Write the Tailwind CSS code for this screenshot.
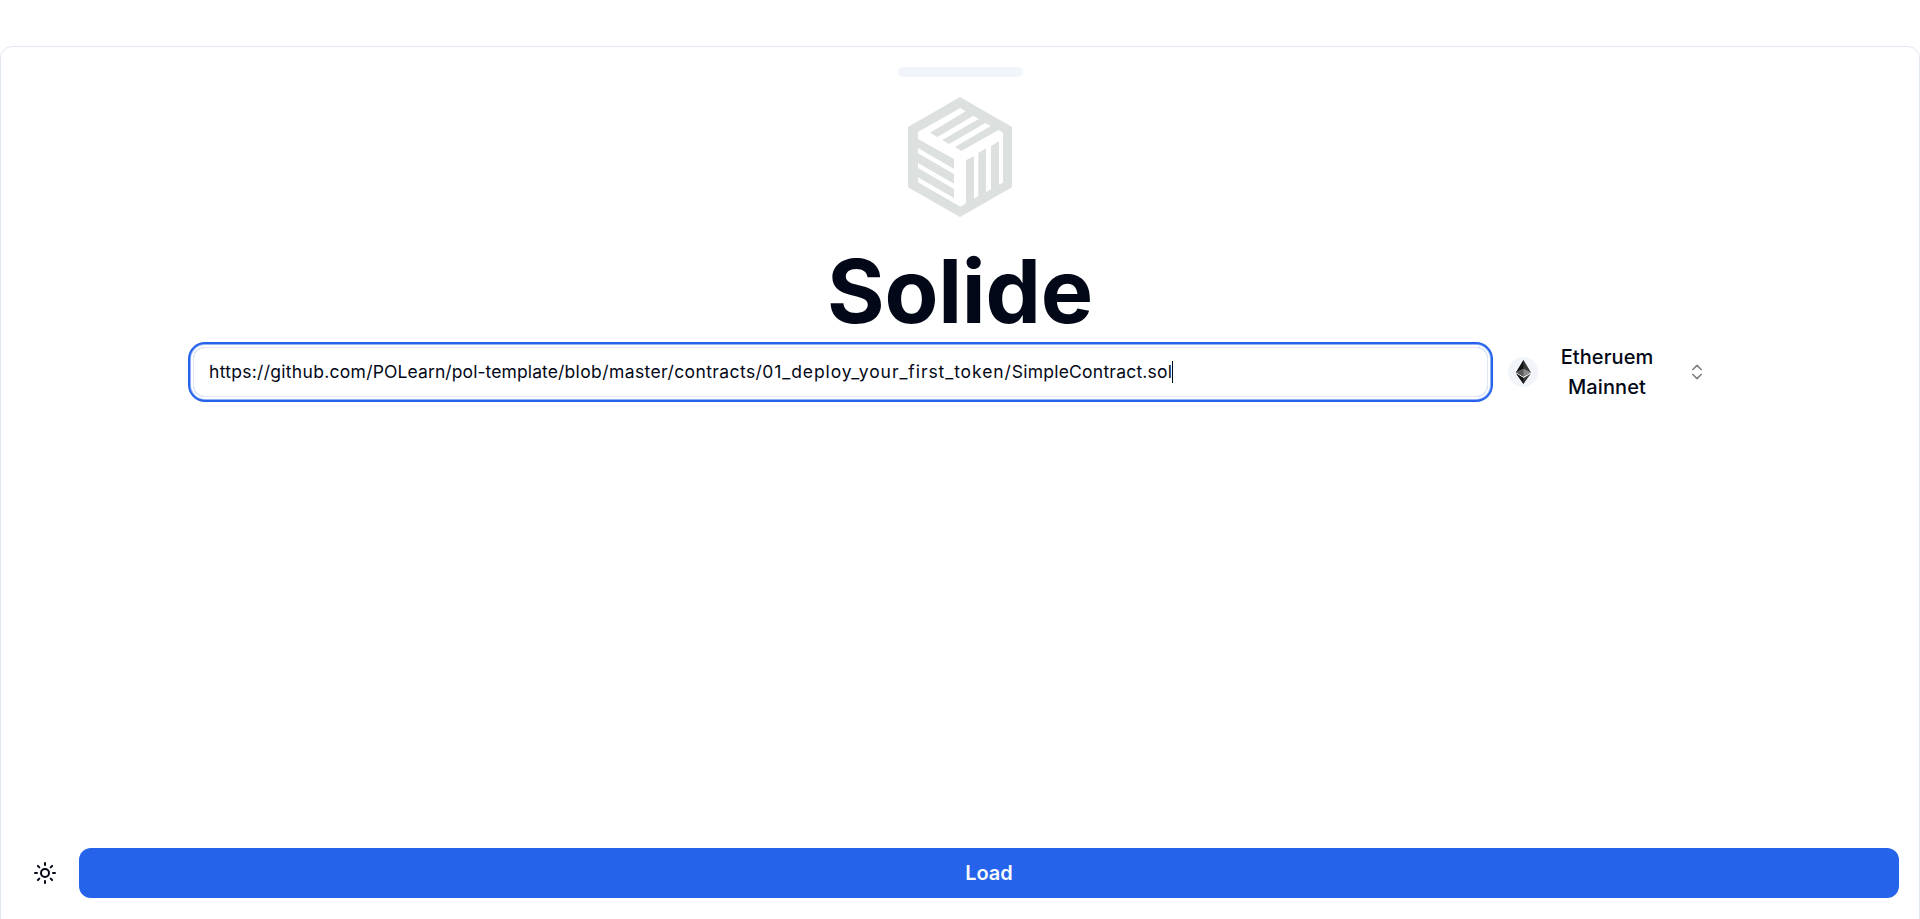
<!DOCTYPE html>
<html lang="en"><head><meta charset="utf-8"><title>Solide</title>
<script src="https://cdn.jsdelivr.net/npm/@tailwindcss/browser@4"></script></head>
<body class="h-screen overflow-hidden bg-white pt-[46px] font-['Inter',sans-serif] text-[#020817]">
<main class="flex h-[885px] flex-col rounded-t-[12px] border border-[#e2e8f0] px-5">
<div class="mx-auto mt-5 h-[10px] w-[125px] shrink-0 rounded-full bg-[#f1f5f9]"></div>
<section class="mx-auto flex w-[1534px] flex-1 flex-col items-center pt-5">
<svg class="h-[120px] w-[104px]" viewBox="84 170 312 360"><path fill="#dce0df" d="M240 170 396 260V441L240 530 84 441V260Z"/>
<g fill="#fff"><path d="M114 275 241 203 257 213 150 277 172 290 280 226 296 236 187 299 207 311 316 248 332 257 225 320 244 332 355 269 369 277V427L357 433V303L333 317V447L318 455V324L295 338V467L282 475V347L258 360V489L241 499 222 488V356L114 296Z"/><path d="M114 323 222 386V401L114 339ZM114 368 222 430V446L114 383ZM114 411 222 473V488L114 426Z"/></g></svg>
<h1 class="mt-[29px] h-[91px] text-[88px] leading-[90px] font-bold tracking-[-0.2px]">Solide</h1>
<div class="mt-[5px] flex w-full items-center">
<div class="flex h-[50px] w-[1295px] items-center rounded-[12px] border border-[#e2e8f0] px-[15px] text-[17.5px] shadow-[0_0_0_2px_#fff,0_0_0_3px_#93b1f5,0_0_0_5px_#2563eb]"><span class="whitespace-nowrap"><span class="tracking-[0.29px]">https://github.com/</span><span class="tracking-[0.1px]">POLearn/pol-template/</span><span class="tracking-[0.4px]">blob/master/contracts/</span><span class="tracking-[0.93px]">01_deploy_your_first_token/</span><span class="tracking-[0.22px]">SimpleContract.sol</span></span><i class="h-[22px] w-px bg-[#020817]"></i></div>
<button class="ml-5 flex h-[60px] w-[194px] items-center justify-between text-[20px] leading-[30px] font-medium">
<span class="flex size-[30px] items-center justify-center rounded-full bg-[#f1f5f9]"><svg class="h-[24px] w-[15px]" viewBox="0 0 256 417"><path fill="#393939" d="M128 0 0 212 128 288 256 212Z"/><path fill="#141414" d="M128 0 0 212 128 288Z"/><path fill="#8c8c8c" d="M128 154 0 212 128 288 256 212Z"/><path fill="#5a5a5a" d="M128 154 0 212 128 288Z"/><path fill="#3c3c3b" d="M128 312 0 236 128 417 256 236Z"/><path fill="#141414" d="M128 312 0 236 128 417Z"/></svg></span>
<span class="tracking-[0.1px]">Etheruem<br>Mainnet</span>
<svg class="ml-[11px] -mr-[5px] size-5 opacity-50" viewBox="0 0 24 24" fill="none" stroke="currentColor" stroke-width="2" stroke-linecap="round" stroke-linejoin="round"><path d="m7 15 5 5 5-5M7 9l5-5 5 5"/></svg>
</button>
</div></section>
<footer class="mb-[32px] flex h-[50px] shrink-0 items-center">
<button class="ml-3 mr-[22px] size-6 shrink-0"><svg class="size-6" viewBox="0 0 24 24" fill="none" stroke="currentColor" stroke-width="2" stroke-linecap="round"><circle cx="12" cy="12" r="4"/><path d="M12 2v2M12 20v2M4.93 4.93l1.41 1.41M17.66 17.66l1.41 1.41M2 12h2M20 12h2M6.34 17.66l-1.41 1.41M19.07 4.93l-1.41 1.41"/></svg></button>
<button class="h-[50px] flex-1 rounded-[12px] bg-[#2563eb] text-[20px] font-semibold text-[#f8fafc]">Load</button>
</footer>
</main></body></html>
